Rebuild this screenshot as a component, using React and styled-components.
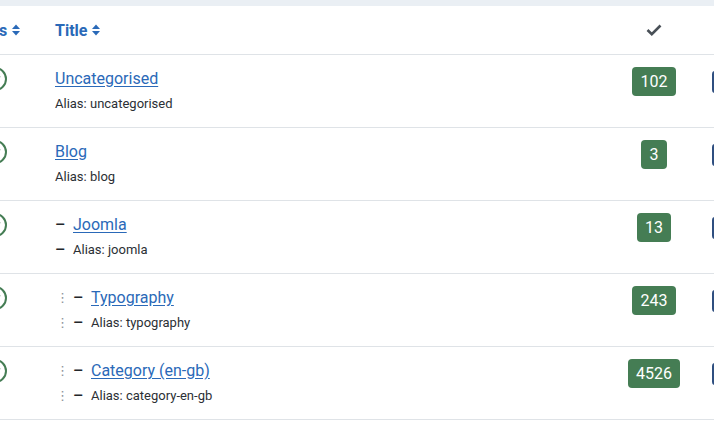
import styled, { createGlobalStyle } from "styled-components";

const GlobalStyle = createGlobalStyle`
  html, body {
    margin: 0;
    padding: 0;
    background: #fff;
    overflow: hidden;
  }
  body {
    font-family: Roboto, "Noto Sans", sans-serif;
    color: #22262a;
  }
`;

const Viewport = styled.div`
  width: 714px;
  height: 421px;
  overflow: hidden;
`;

const TopBar = styled.div`
  height: 6px;
  background: #eaeff4;
`;

const Table = styled.div`
  margin-left: -42px;
  display: grid;
  grid-template-columns: 74px 568px 108px 80px;
`;

const HeadCell = styled.div`
  height: 49px;
  box-sizing: border-box;
  display: flex;
  align-items: center;
  justify-content: ${(p) => (p.$center ? "center" : "flex-start")};
  padding-left: ${(p) => p.$pad || 0}px;
  padding-right: ${(p) => p.$padRight || 0}px;
  border-bottom: 1px solid #dfe3e7;
  font-size: 16px;
  font-weight: 700;
  color: #2a69b8;
  gap: 4px;
  white-space: nowrap;
`;

const Cell = styled.div`
  height: 73px;
  box-sizing: border-box;
  padding-top: 12px;
  padding-left: ${(p) => p.$pad || 0}px;
  display: flex;
  flex-direction: column;
  align-items: ${(p) => (p.$center ? "center" : "flex-start")};
  border-bottom: 1px solid #dfe3e7;
  overflow: hidden;
`;

const StatusIcon = styled.span`
  width: 24px;
  height: 24px;
  box-sizing: border-box;
  border: 2px solid #457d54;
  border-radius: 50%;
  display: flex;
  align-items: center;
  justify-content: center;
`;

const TitleLine = styled.div`
  display: flex;
  align-items: center;
  line-height: 24px;
  font-size: 16px;
  white-space: nowrap;
`;

const AliasLine = styled(TitleLine)`
  margin-top: 3px;
  font-size: 13px;
  line-height: 19px;
  color: #2b3035;
`;

const TitleLink = styled.a`
  color: #2a69b8;
  text-decoration: underline;
  text-underline-offset: 2px;
`;

const Dots = styled.span`
  display: inline-block;
  width: 17px;
  padding-left: 1px;
  color: #8d9298;
  font-size: 13px;
  font-family: "DejaVu Sans", sans-serif;
`;

const Dash = styled.span`
  display: inline-block;
  width: 18px;
  font-size: 16px;
  font-weight: 500;
  color: #22262a;
`;

const Count = styled.span`
  display: inline-block;
  background: #457d54;
  color: #fff;
  font-size: 16px;
  line-height: 29px;
  height: 29px;
  padding: 0 8.5px;
  border-radius: 4px;
`;

const SideButton = styled.span`
  display: block;
  margin-top: 4px;
  margin-left: 4px;
  width: 30px;
  height: 22px;
  background: #2f4f80;
  border-radius: 3px;
`;

const SortIcon = () => (
  <svg width="10" height="14" viewBox="0 0 10 14">
    <path d="M1 6 L5 1.5 L9 6 Z" fill="#2a69b8" />
    <path d="M1 8 L5 12.5 L9 8 Z" fill="#2a69b8" />
  </svg>
);

const CheckIcon = ({ color = "#495057", size = 16 }) => (
  <svg width={size} height={size * 0.75} viewBox="0 0 16 12">
    <polyline
      points="1.5,6 5.8,10.2 14.5,1.5"
      fill="none"
      stroke={color}
      strokeWidth="2.6"
    />
  </svg>
);

const rows = [
  { title: "Uncategorised", alias: "uncategorised", level: 1, count: 102 },
  { title: "Blog", alias: "blog", level: 1, count: 3 },
  { title: "Joomla", alias: "joomla", level: 2, count: 13 },
  { title: "Typography", alias: "typography", level: 3, count: 243 },
  { title: "Category (en-gb)", alias: "category-en-gb", level: 3, count: 4526 },
];

function Prefix({ level }) {
  const dots = [];
  for (let i = 0; i < level - 2; i++) dots.push(<Dots key={i}>⋮</Dots>);
  return (
    <>
      {dots}
      {level > 1 && <Dash>–</Dash>}
    </>
  );
}

export default function App() {
  return (
    <Viewport>
      <GlobalStyle />
      <TopBar />
      <Table>
        <HeadCell $center $padRight={8}>
          Status <SortIcon />
        </HeadCell>
        <HeadCell $pad={23}>
          Title <SortIcon />
        </HeadCell>
        <HeadCell $center>
          <CheckIcon />
        </HeadCell>
        <HeadCell />

        {rows.map((r) => (
          <>
            <Cell key={r.alias + "-s"} $center>
              <StatusIcon>
                <CheckIcon color="#457d54" size={12} />
              </StatusIcon>
            </Cell>
            <Cell key={r.alias + "-t"} $pad={23}>
              <TitleLine>
                <Prefix level={r.level} />
                <TitleLink href="#">{r.title}</TitleLink>
              </TitleLine>
              <AliasLine>
                <Prefix level={r.level} />
                Alias: {r.alias}
              </AliasLine>
            </Cell>
            <Cell key={r.alias + "-c"} $center>
              <Count>{r.count}</Count>
            </Cell>
            <Cell key={r.alias + "-x"}>
              <SideButton />
            </Cell>
          </>
        ))}
      </Table>
    </Viewport>
  );
}
